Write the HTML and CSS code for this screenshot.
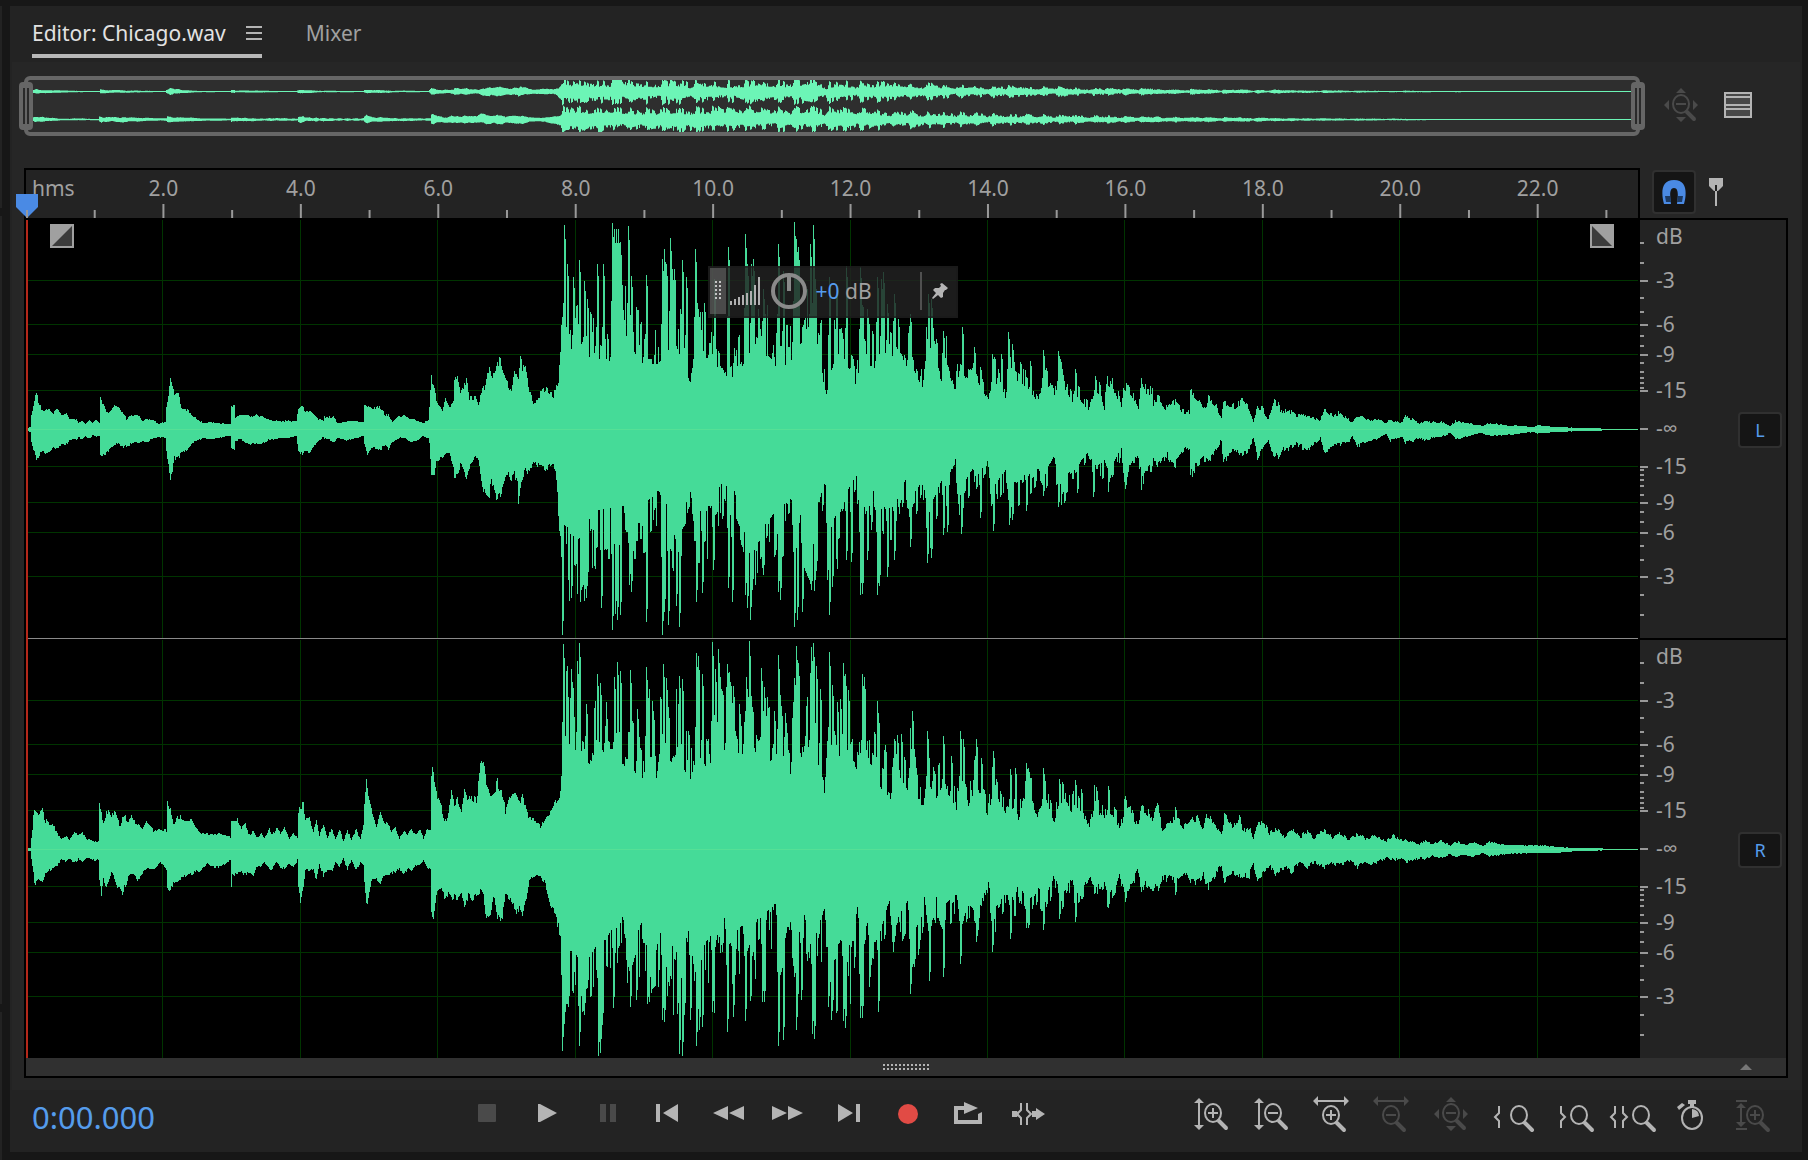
FILE: index.html
```html
<!DOCTYPE html>
<html lang="en">
<head>
    <meta charset="UTF-8">
    <meta name="viewport" content="width=device-width, initial-scale=1.0">
    <title>Editor: Chicago.wav</title>
    <link rel="stylesheet" href="styles.css">
</head>
<body>
    <main class="panel">
        <nav class="tabs">
            <div class="tab active">
                <a href="#editor">Editor: Chicago.wav</a>
                <button class="tab-menu" aria-label="Panel menu">
                    <svg width="16" height="16" viewBox="0 0 16 16"><path d="M0 2h16M0 8h16M0 14h16" stroke="#b4b4b4" stroke-width="2"/></svg>
                </button>
            </div>
            <div class="tab"><a href="#mixer">Mixer</a></div>
        </nav>

        <section class="workspace" id="editor">
            <div class="overview">
                <svg id="overviewWave" viewBox="2 0 1608 52" preserveAspectRatio="none"></svg>
                <button class="range-handle start" aria-label="Range start"></button>
                <button class="range-handle end" aria-label="Range end"></button>
            </div>
            <div class="side-tools">
                <button class="icon-button disabled" aria-label="Zoom out full" disabled>
                    <svg width="44" height="36" viewBox="0 0 44 36"><use href="#zoomFull"/></svg>
                </button>
                <button class="icon-button" aria-label="Show spectral display">
                    <svg width="28" height="26" viewBox="0 0 28 26"><rect x="1" y="1" width="26" height="24" fill="#484848" stroke="#b4b4b4" stroke-width="2"/><path d="M1 5h26M1 13h26M1 17h26" stroke="#b4b4b4" stroke-width="2"/></svg>
                </button>
            </div>

            <div class="ruler">
                <svg id="ruler" class="fill"></svg>
                <svg class="playhead" width="22" height="24" viewBox="0 0 22 24"><path d="M0 0h22v13L11 24 0 13z" fill="#4a8ae4"/><path d="M10 16h2v8h-2z" fill="#999"/></svg>
            </div>
            <div class="snap-tools">
                <button class="toggle snap" aria-label="Toggle snapping" aria-pressed="true">
                    <svg width="24" height="24" viewBox="0 0 24 24"><path d="M2 24C-1 13-1 0 12 0s13 13 10 24h-7c1-8 2-16-3-16s-4 8-3 16z" fill="#4a8ae4"/><path d="M3 16h5l1 6H4zM21 16h-5l-1 6h5z" fill="#1c3a63"/></svg>
                </button>
                <button class="icon-button marker" aria-label="Add marker">
                    <svg width="14" height="28" viewBox="0 0 14 28"><path d="M0 0h14v8l-5 5H8v15H6V13H5L0 8z" fill="#b4b4b4"/><path d="M6 7h2v6H6z" fill="#222"/></svg>
                </button>
            </div>

            <div class="plot">
                <svg id="waveL" class="wave" viewBox="0 0 1612 418" preserveAspectRatio="none"></svg>
                <svg id="waveR" class="wave" viewBox="0 0 1612 418" preserveAspectRatio="none"></svg>
                <span class="cursor-line"></span>
                <button class="fade fade-in" aria-label="Fade in">
                    <svg width="24" height="24" viewBox="0 0 24 24"><path d="M0 0h24v24H0z" fill="#a0a0a0"/><path d="M22 2v20H2z" fill="#3c3c3c"/></svg>
                </button>
                <button class="fade fade-out" aria-label="Fade out">
                    <svg width="24" height="24" viewBox="0 0 24 24"><path d="M0 0h24v24H0z" fill="#a0a0a0"/><path d="M2 2v20h20z" fill="#3c3c3c"/></svg>
                </button>
                <div class="hud">
                    <span class="hud-grip"><svg width="6" height="20" viewBox="0 0 6 20"><path d="M1 0v20M5 0v20" stroke="#c4c4c4" stroke-width="2" stroke-dasharray="2 2"/></svg></span>
                    <svg class="hud-bars" width="30" height="28" viewBox="0 0 30 28"><path d="M1 28v-4M5 28v-6M9 28v-8M13 28V18M17 28V16M21 28V14M25 28V8M29 28V0" stroke="#b0b0b0" stroke-width="2"/></svg>
                    <svg class="hud-knob" width="36" height="36" viewBox="0 0 36 36"><circle cx="18" cy="18" r="16" fill="none" stroke="#8a8a8a" stroke-width="4"/><path d="M18 3v15" stroke="#8a8a8a" stroke-width="4"/></svg>
                    <span class="hud-value"><b>+0</b> dB</span>
                    <button class="hud-pin" aria-label="Pin HUD">
                        <svg width="16" height="16" viewBox="0 0 16 16"><path d="M10 0l6 5-2 2-1 0-2 3 0 4-2 1-3-3-5 4-1-1 4-5-3-3 2-2 4 0 2-2-1-2z" fill="#b4b4b4"/></svg>
                    </button>
                </div>
            </div>
            <div class="scales">
                <div class="scale"><svg class="fill scale-svg"></svg><button class="toggle channel">L</button></div>
                <div class="scale"><svg class="fill scale-svg"></svg><button class="toggle channel">R</button></div>
            </div>

            <div class="splitter">
                <svg width="46" height="6" viewBox="0 0 46 6"><path d="M0 1h46M0 5h46" stroke="#b4b4b4" stroke-width="2" stroke-dasharray="2 2"/></svg>
                <svg class="splitter-arrow" width="12" height="6" viewBox="0 0 12 6"><path d="M6 0l6 6H0z" fill="#777"/></svg>
            </div>
        </section>

        <footer class="controls">
            <div class="timecode">0:00.000</div>
            <div class="button-row">
                <button class="disabled" aria-label="Stop" disabled><svg viewBox="0 0 44 36"><rect x="13" y="8" width="18" height="18" rx="1"/></svg></button>
                <button aria-label="Play"><svg viewBox="0 0 44 36"><path d="M13 8h2l17 9-17 9h-2z"/></svg></button>
                <button class="disabled" aria-label="Pause" disabled><svg viewBox="0 0 44 36"><path d="M15 8h6v18h-6zM25 8h6v18h-6z"/></svg></button>
                <button aria-label="Previous"><svg viewBox="0 0 44 36"><path d="M11 8h4v18h-4zM33 8v18l-15-9z"/></svg></button>
                <button aria-label="Rewind"><svg viewBox="0 0 44 36"><path d="M23 10v14L8 17zM39 10v14l-15-7z"/></svg></button>
                <button aria-label="Fast forward"><svg viewBox="0 0 44 36"><path d="M7 10v14l15-7zM23 10v14l15-7z"/></svg></button>
                <button aria-label="Next"><svg viewBox="0 0 44 36"><path d="M13 8v18l15-9zM31 8h4v18h-4z"/></svg></button>
                <button class="record" aria-label="Record"><svg viewBox="0 0 44 36"><circle cx="23" cy="18" r="10"/></svg></button>
                <button aria-label="Loop"><svg viewBox="0 0 44 36"><path d="M9 10h10V6l14 6-14 6v-4h-6v10h20v-6l4-2v12H9z"/></svg></button>
                <button aria-label="Skip selection"><svg viewBox="0 0 44 36"><path d="M7 15h5l2 3-2 3H7zM27 15h4v-3l9 6-9 6v-3h-4z"/><path class="line" d="M16 7v7l-4 4 4 4v7M22 7v7l4 4-4 4v7"/></svg></button>
            </div>
            <div class="button-row zoom-row">
                <button aria-label="Zoom in amplitude"><svg viewBox="0 0 44 36"><use href="#vArrow"/><use href="#lens" x="24" y="17"/><use href="#plus" x="24" y="17"/></svg></button>
                <button aria-label="Zoom out amplitude"><svg viewBox="0 0 44 36"><use href="#vArrow"/><use href="#lens" x="24" y="17"/><use href="#minus" x="24" y="17"/></svg></button>
                <button aria-label="Zoom in time"><svg viewBox="0 0 44 36"><use href="#hArrow"/><use href="#lens" x="22" y="19"/><use href="#plus" x="22" y="19"/></svg></button>
                <button class="disabled" aria-label="Zoom out time" disabled><svg viewBox="0 0 44 36"><use href="#hArrow"/><use href="#lens" x="22" y="19"/><use href="#minus" x="22" y="19"/></svg></button>
                <button class="disabled" aria-label="Zoom out full" disabled><svg viewBox="0 0 44 36"><use href="#zoomFull"/></svg></button>
                <button aria-label="Zoom in at in point"><svg viewBox="0 0 44 36"><path class="line" d="M10 10v7l-4 4 4 4v7"/><use href="#lens" x="30" y="19"/></svg></button>
                <button aria-label="Zoom in at out point"><svg viewBox="0 0 44 36"><path class="line" d="M12 10v7l4 4-4 4v7"/><use href="#lens" x="30" y="19"/></svg></button>
                <button aria-label="Zoom to selection"><svg viewBox="0 0 44 36"><path class="line" d="M6 10v7l-4 4 4 4v7M14 10v7l4 4-4 4v7"/><use href="#lens" x="32" y="19"/></svg></button>
                <button aria-label="Zoom to time"><svg viewBox="0 0 44 36"><ellipse class="line" cx="23" cy="22" rx="10" ry="11"/><path d="M23 22v-9q7 1 7 7zM19 4h8v4h-2v3h-4V8h-2zM10 14l-2-3 5-4 3 2z"/></svg></button>
                <button class="disabled" aria-label="Zoom selected track" disabled><svg viewBox="0 0 44 36"><path d="M7 4h11v2H7zM7 32h11v2H7zM12 7l5 5h-4v14h4l-5 5-5-5h4V12H7z"/><use href="#lens" x="26" y="19"/><use href="#plus" x="26" y="19"/></svg></button>
            </div>
        </footer>
    </main>

    <svg class="symbols" width="0" height="0">
        <defs>
            <g id="lens"><ellipse class="line" cx="0" cy="0" rx="8" ry="9"/><path class="grip" d="M6 8l7 7"/></g>
            <path id="plus" class="line" d="M-5 0H5M0-5V5"/>
            <path id="minus" class="line" d="M-5 0H5"/>
            <path id="vArrow" d="M10 2l5 5h-4v22h4l-5 5-5-5h4V7H5z"/>
            <path id="hArrow" d="M4 5l5-5v4h26V0l5 5-5 5V6H9v4z"/>
            <g id="zoomFull"><path d="M22 1l5 5H17zM22 35l5-5H17zM5 18l5-5v10zM39 18l-5-5v10z"/><use href="#lens" x="22" y="17"/><use href="#minus" x="22" y="17"/></g>
        </defs>
    </svg>
    <script src="editor.js"></script>
</body>
</html>
```

FILE: styles.css
```css
* {
    box-sizing: border-box;
}
body {
    margin: 0;
    padding: 6px 6px 8px 10px;
    min-height: 100vh;
    display: flex;
    background-color: #171717;
    background-image: linear-gradient(#171717 6px, #232323 6px, #232323 208px, #171717 208px, #171717 216px, #232323 216px, #232323 1004px, #171717 1004px, #171717 1012px, #232323 1012px);
    background-size: 2px 100%;
    background-repeat: no-repeat;
    font-family: "Noto Sans", "Open Sans", sans-serif;
    font-size: 21px;
    color: #a0a0a0;
}
button {
    border: none;
    padding: 0;
    background: none;
    font: inherit;
    cursor: pointer;
}
svg {
    display: block;
}
a {
    color: inherit;
    text-decoration: none;
}
.panel {
    flex: 1;
    min-width: 0;
    display: flex;
    flex-direction: column;
    background-color: #232323;
}

/* tabs */
.tabs {
    display: flex;
    gap: 44px;
    height: 56px;
    padding: 6px 22px 4px;
}
.tab {
    display: flex;
    align-items: center;
    gap: 20px;
    border-bottom: 4px solid transparent;
}
.tab.active {
    color: #e2e2e2;
    border-color: #b8b8b8;
}

/* editor */
.workspace {
    flex: 1;
    margin: 0 2px;
    padding: 14px 12px 12px;
    background-color: #262626;
    display: grid;
    grid-template-columns: minmax(0, 1fr) 148px;
    grid-template-rows: 60px 82px minmax(300px, 1fr) 20px;
}
.fill {
    width: 100%;
    height: 100%;
}
.overview {
    position: relative;
    border: 4px solid #666;
    border-radius: 6px;
    background-color: #2e2e2e;
}
.overview svg {
    width: 100%;
    height: 52px;
    fill: #6cf5b6;
}
.range-handle {
    position: absolute;
    top: 2px;
    width: 14px;
    height: 48px;
    border: solid #666;
    border-width: 6px 4px;
    border-radius: 4px;
    background: linear-gradient(90deg, #2a2a2a 2px, #666 2px, #666 4px, #2a2a2a 4px);
}
.range-handle.start {
    left: -9px;
}
.range-handle.end {
    right: -9px;
}
.side-tools {
    display: flex;
    align-items: center;
    gap: 21px;
    padding: 0 0 2px 19px;
}
.icon-button {
    fill: #b4b4b4;
    stroke: none;
}
.disabled {
    cursor: default;
}
.ruler {
    position: relative;
    margin-top: 32px;
    border: 2px solid #000;
    border-bottom: none;
    background-color: #232323;
}
.ruler rect,
.scale-svg rect {
    fill: #999;
}
.ruler text,
.scale-svg text {
    fill: #a0a0a0;
}
.playhead {
    position: absolute;
    left: -10px;
    bottom: 0;
    z-index: 1;
}
.snap-tools {
    display: flex;
    align-items: flex-start;
    gap: 13px;
    margin-top: 34px;
    padding-left: 12px;
}
.toggle {
    display: flex;
    align-items: center;
    justify-content: center;
    width: 44px;
    border: 2px solid #303030;
    border-radius: 4px;
    background-color: #151515;
    color: #559cec;
}
.snap {
    height: 44px;
}
.marker {
    padding-top: 8px;
}
.plot {
    position: relative;
    display: grid;
    grid-template-rows: 1fr 1fr;
    gap: 2px;
    padding: 2px 2px 0;
    background-color: #000;
}
.wave {
    width: 100%;
    height: 100%;
    min-height: 0;
    fill: #45db98;
}
.wave .grid-line {
    fill: #003400;
}
.wave .center-line {
    fill: #55e096;
}
#waveL {
    box-shadow: 0 1px #8a8a8a;
}
.cursor-line {
    position: absolute;
    left: 2px;
    top: 2px;
    bottom: 0;
    width: 2px;
    background-color: #b4281a;
}
.fade {
    position: absolute;
    top: 6px;
}
.fade-in {
    left: 26px;
}
.fade-out {
    right: 26px;
}

/* volume HUD */
.hud {
    position: absolute;
    top: 48px;
    left: 42.3%;
    width: 250px;
    height: 52px;
    padding-bottom: 2px;
    display: flex;
    align-items: center;
    background-color: rgba(34, 34, 34, 0.82);
    border: 2px solid rgba(24, 24, 24, 0.5);
}
.hud-grip {
    display: flex;
    align-items: center;
    justify-content: center;
    width: 16px;
    height: 100%;
    background-color: rgba(120, 120, 120, 0.5);
}
.hud-bars {
    margin-left: 4px;
}
.hud-knob {
    margin-left: 11px;
}
.hud-value {
    margin-left: 9px;
    font-size: 21px;
}
.hud-value b {
    color: #559cec;
    font-weight: normal;
}
.hud-pin {
    height: 38px;
    margin-left: auto;
    padding: 0 8px 0 10px;
    border-left: 2px solid #505050;
}

/* dB scales */
.scales {
    display: grid;
    grid-template-rows: 1fr 1fr;
    gap: 2px;
    padding: 2px 2px 0 0;
    background-color: #000;
}
.scale {
    display: grid;
    grid-template-columns: minmax(0, 1fr) 44px;
    align-items: center;
    padding-right: 4px;
    min-height: 0;
    background-color: #232323;
}
.scale-svg {
    overflow: visible;
    min-height: 0;
}
.channel {
    height: 36px;
    margin-top: 2px;
    font-size: 18px;
}
.splitter {
    grid-column: 1 / -1;
    display: grid;
    grid-template-columns: 1fr auto 1fr;
    align-items: center;
    border: 2px solid #000;
    border-top: none;
    background-color: #303030;
}
.splitter svg:first-child {
    grid-column: 2;
}
.splitter-arrow {
    justify-self: end;
    margin-right: 34px;
}

/* transport and zoom */
.controls {
    display: flex;
    height: 62px;
    padding: 0 21px 0 22px;
}
.timecode {
    flex: 0 1 425px;
    font-size: 31px;
    line-height: 55px;
    color: #559cec;
}
.button-row {
    display: flex;
    align-items: flex-start;
    padding-top: 6px;
}
.zoom-row {
    margin-left: auto;
}
.button-row button {
    width: 60px;
    display: flex;
    justify-content: center;
    fill: #b4b4b4;
    stroke: #b4b4b4;
}
.button-row svg {
    width: 44px;
    height: 36px;
    overflow: visible;
    stroke-width: 0;
}
.button-row .disabled,
.side-tools .disabled {
    fill: #4a4a4a;
    stroke: #4a4a4a;
}
.side-tools .disabled svg {
    stroke-width: 0;
}
.button-row .record {
    fill: #e14b45;
}
.line {
    fill: none;
    stroke-width: 2px;
}
.grip {
    stroke-width: 4px;
    stroke-linecap: round;
}
.symbols {
    position: absolute;
}
```

FILE: editor.js
```javascript
const DURATION = 23.46;
const WIDTH = 1612;
const MID = 209;

// envelope: x, level above the centre, level below it
const channels = {
    L: {
        envelope: `0 1 1,4 2 2,5 13 12,8 27 22,10 37 32,13 24 25,17 17 22,23 21 24,27 15 18,31 21 19,35 14 14,40 16 14,43 11 10,50 9 10,52 6 7,56 8 9,59 5 6,63 9 9,66 6 5,70 10 7,73 6 6,74 32 24,77 24 25,80 16 23,84 19 19,88 23 15,92 21 13,96 17 17,100 10 16,106 14 13,113 13 12,116 8 12,121 10 12,127 9 8,132 5 7,139 7 8,140 22 20,142 32 36,144 54 54,146 45 42,148 34 28,152 35 28,155 22 23,161 19 20,165 13 13,171 10 11,177 6 8,184 7 9,192 6 8,204 5 6,205 23 18,208 23 19,209 11 11,214 14 9,219 14 13,225 12 14,230 14 14,236 12 14,242 9 10,251 8 9,270 8 6,272 20 22,276 23 24,279 18 21,283 18 22,287 14 16,292 10 11,297 8 7,298 12 8,307 12 12,311 6 8,320 8 10,337 7 6,338 26 14,341 24 25,345 21 17,354 22 20,359 14 14,362 14 19,366 7 12,372 12 8,378 13 8,383 11 11,389 9 12,397 6 6,402 9 9,403 22 14,405 50 45,408 40 45,410 30 30,416 18 28,419 32 24,423 22 23,427 28 38,428 46 48,431 55 48,434 38 33,437 40 38,440 50 50,443 30 36,449 32 28,452 24 30,455 36 48,459 44 68,462 60 70,465 52 52,470 60 68,474 70 64,477 58 56,480 48 44,485 37 48,488 62 44,491 52 52,492 50 76,494 72 60,496 58 48,499 62 40,503 38 44,507 26 30,511 28 36,514 36 34,519 40 40,523 36 36,527 34 34,530 46 48,532 44 80,534 82 108,536 110 108,550 82 123,567 84 95,583 77 90,600 105 88,615 76 88,632 76 70,649 100 100,664 50 68,668 88 95,683 76 88,698 54 56,714 68 78,728 100 125,749 73 95,764 75 80,783 110 115,793 95 80,799 35 54,807 75 105,816 85 80,830 50 52,835 85 98,847 66 66,860 90 92,868 85 90,879 58 56,883 80 85,896 48 50,901 90 95,915 55 60,917 80 70,929 40 34,933 65 70,946 48 46,949 60 50,962 32 32,966 58 68,980 32 45,984 60 65,1001 48 50,1012 30 45,1017 55 52,1028 29 30,1032 60 62,1046 30 45,1049 40 45,1062 22 25,1068 42 42,1074 40 40,1078 22 35,1082 45 48,1089 42 34,1095 18 20,1098 46 45,1103 38 40,1108 32 30,1112 22 25,1115 54 54,1119 40 40,1126 38 36,1127 26 28,1132 31 38,1141 20 26,1148 28 36,1155 18 22,1163 18 18,1164 36 43,1166 38 42,1174 26 34,1179 20 28,1182 34 30,1189 24 22,1195 12 10,1197 30 35,1203 24 25,1210 24 20,1216 28 24,1222 22 20,1227 8 8,1231 22 27,1236 20 18,1242 10 10,1247 28 28,1252 26 26,1255 18 20,1263 18 18,1270 13 14,1281 15 20,1294 8 8,1297 20 22,1308 12 16,1312 16 15,1322 10 12,1326 6 6,1331 14 16,1344 8 10,1349 10 10,1360 6 4,1363 9 11,1375 6 6,1379 13 13,1394 6 8,1398 8 10,1411 6 6,1415 7 7,1424 3 3,1429 8 9,1442 6 6,1456 3 3,1463 6 6,1480 4 5,1508 2 2,1511 4 4,1528 2 2,1556 1 1,1580 .4 .4,1612 .4 .4`,
        up: '538 204,541 165,547 152,553 169,558 148,561 130,571 165,577 165,586 206,588 200,590 200,592 200,594 187,602 203,605 153,620 154,636 170,638 180,640 165,644 191,646 160,648 160,656 169,660 152,669 180,672 120,678 126,688 150,702 182,719 195,721 165,725 165,727 170,732 120,737 140,752 185,757 158,768 207,770 190,772 182,784 185,787 204,789 150,803 152,810 145,820 163,834 162,841 120,851 152,855 150,857 157,861 125,868 135,872 110,884 115,902 135,905 130,917 98,936 102,948 82,966 75,975 75,982 97,986 85,1004 68,1017 79,1032 78,1049 60,1069 53,1084 48',
        down: '536 205,542 150,545 168,554 172,558 171,560 168,575 178,586 200,589 184,591 190,594 185,603 155,605 162,620 192,636 205,638 182,642 195,650 176,653 197,670 172,676 163,687 140,702 158,706 172,719 165,721 178,724 190,726 160,737 145,752 162,754 170,768 197,771 190,776 182,785 160,788 161,790 141,801 150,803 185,806 157,820 130,825 132,834 165,836 164,841 130,851 165,853 156,861 147,868 130,884 117,901 133,905 128,917 105,921 102,935 104,954 88,967 101,983 95,986 90,1000 81,1017 66,1032 77,1051 63,1067 67,1099 59'
    },
    R: {
        envelope: `0 1 1,4 1 1,5 10 10,7 32 22,8 39 35,12 36 30,16 38 30,19 28 24,26 25 18,31 15 15,35 10 10,40 12 11,43 9 9,48 17 13,52 13 9,56 16 12,60 10 8,68 7 10,72 8 10,73 44 28,75 35 48,77 28 30,80 35 38,82 38 32,85 33 22,88 38 28,91 33 36,93 22 35,96 31 42,99 32 36,102 26 26,105 35 25,108 27 24,112 24 30,116 20 24,120 27 18,127 18 20,134 19 12,140 18 20,141 46 38,144 38 40,147 25 34,152 33 30,158 29 27,165 30 24,169 22 22,175 16 20,181 15 14,192 15 18,204 12 10,205 30 37,206 30 25,211 30 24,215 20 22,219 24 25,223 14 22,227 18 24,230 11 17,235 15 16,238 10 12,243 20 19,246 14 18,250 21 12,254 15 18,258 21 18,263 10 14,267 16 17,271 11 10,272 38 38,274 42 50,277 44 38,279 30 20,283 30 20,287 17 18,290 27 30,293 13 14,297 25 25,301 12 20,305 20 22,309 10 12,313 20 17,317 8 8,321 18 20,325 9 10,330 20 20,334 9 12,337 25 15,338 45 35,340 68 56,342 52 50,345 40 30,350 22 30,354 37 35,357 28 25,361 27 26,365 16 22,369 22 24,373 10 18,378 18 24,381 14 18,385 20 22,389 14 16,394 19 15,397 10 10,401 20 18,404 20 20,405 75 65,407 78 68,409 66 52,411 50 44,415 42 40,418 26 46,422 34 45,425 58 50,428 46 46,431 50 48,435 40 46,438 58 56,442 48 46,445 52 50,450 48 45,454 80 42,457 84 46,460 62 70,464 50 62,468 58 45,471 66 64,475 60 72,479 38 42,484 52 48,489 53 60,493 46 60,496 55 68,500 38 50,503 30 30,509 30 25,514 22 26,518 30 32,521 32 42,525 38 56,529 45 60,533 50 85,535 75 100,537 140 110,545 105 110,549 115 118,567 92 105,573 120 95,581 102 100,596 95 75,605 95 110,615 78 85,623 110 110,630 82 105,634 115 80,646 100 110,651 110 115,666 70 85,670 110 110,683 90 95,688 130 115,697 105 62,701 140 110,716 95 85,720 135 120,731 93 80,749 105 62,753 120 110,764 86 82,768 140 110,778 85 75,785 140 115,798 60 66,802 130 115,814 85 105,825 110 110,831 75 62,835 120 110,843 90 75,856 68 85,864 58 55,868 90 85,881 62 60,885 100 100,892 52 80,898 52 55,901 80 85,910 60 55,917 75 65,930 46 52,935 80 80,942 50 60,950 75 72,962 36 38,967 68 70,979 40 52,989 50 55,992 34 38,1001 65 60,1011 36 42,1019 58 55,1028 30 28,1034 55 52,1046 42 32,1050 50 52,1064 24 30,1068 50 45,1077 32 34,1082 44 52,1089 34 40,1094 18 22,1098 42 45,1106 38 34,1111 22 22,1115 42 42,1120 40 34,1126 28 36,1132 44 36,1136 18 28,1145 28 30,1149 30 32,1158 22 22,1165 30 34,1171 30 30,1177 20 24,1180 32 38,1189 26 24,1195 14 14,1198 34 32,1205 24 24,1213 26 26,1219 18 25,1223 22 26,1227 10 14,1231 26 28,1238 24 24,1243 16 15,1250 20 26,1258 12 16,1265 20 22,1274 12 12,1281 18 17,1287 10 12,1298 20 18,1306 12 13,1313 17 16,1322 9 10,1331 16 17,1339 10 12,1346 13 14,1360 8 8,1367 14 10,1377 8 8,1380 9 12,1393 5 8,1398 8 9,1406 5 6,1415 8 8,1424 4 4,1429 8 7,1439 4 5,1446 7 7,1456 3 3,1463 7 6,1480 4 4,1511 4 3,1532 2 3,1549 1 1,1580 .4 .4,1612 .4 .4`,
        up: '537 205,540 178,545 180,551 188,553 206,560 145,571 175,574 166,588 172,591 187,594 178,604 179,611 140,620 182,626 148,637 185,640 171,653 173,656 170,670 196,672 193,676 175,686 207,689 180,692 200,694 172,700 162,702 176,707 163,713 145,720 172,723 208,725 153,735 181,738 162,741 152,748 138,752 194,755 143,759 136,770 203,772 186,780 143,785 202,787 206,790 183,794 160,803 197,806 164,811 147,814 150,817 186,819 175,822 159,836 175,838 172,851 148,852 136,859 104,868 110,871 114,875 115,886 138,901 118,917 113,925 93,934 118,937 110,950 110,955 91,967 98,984 80,989 81,1000 86,1017 81,1033 70,1049 69,1055 60,1070 62,1082 63,1099 53,1149 42,1198 36,1213 34',
        down: '536 201,538 174,542 157,553 196,558 165,572 206,574 203,576 175,587 158,604 157,610 150,621 154,636 170,638 172,651 164,653 204,656 206,658 165,664 170,670 196,673 180,676 177,686 162,701 182,707 167,719 171,736 152,738 152,752 196,757 190,770 180,775 150,786 184,788 189,802 157,806 161,817 171,819 178,834 168,836 168,843 137,852 162,868 92,884 144,888 117,903 131,917 127,934 114,950 92,966 102,984 89,1000 78,1017 80,1033 69,1049 72,1082 58,1099 52,1149 45'
    }
};

// ruler in seconds, dB rows as y within one channel
const majorTimes = [2, 4, 6, 8, 10, 12, 14, 16, 18, 20, 22];
const dbRows = [[60, '-3'], [104, '-6'], [134, '-9'], [170, '-15']];
const dbMinor = [22, 42, 77, 91, 115, 125, 142, 151, 157, 162, 167];

// small repeatable generator, so the detail is the same on each load
let seed = 7;
function random() {
    seed = (seed * 16807) % 2147483647;
    return seed / 2147483647;
}

function parse(text) {
    return text.split(',').map(item => item.trim().split(' ').map(Number));
}

function levels(points, spikes, side) {
    const out = [];
    let i = 0;
    let noise = 1;
    for (let x = 0; x < WIDTH; x++) {
        while (i < points.length - 2 && points[i + 1][0] <= x) i++;
        const a = points[i], b = points[i + 1];
        const t = (x - a[0]) / (b[0] - a[0] || 1);
        if (x % 2 === 0 || random() > 0.6) {
            const r = random();
            if (x > 537 && x < 860) noise = 0.86 + 0.65 * r * r;
            else if (x >= 860 && x < 1100) noise = 0.85 + 0.5 * r * r;
            else if (x >= 1100) noise = 0.84 + 0.3 * r;
            else noise = 0.92 + 0.16 * r;
        }
        out.push((a[side] + (b[side] - a[side]) * t) * noise);
    }
    spikes.forEach(([x, level]) => {
        out[x] = level;
        out[x + 1] = Math.max(out[x + 1], level * 0.93);
        out[x - 1] = Math.max(out[x - 1], level * 0.62);
    });
    return out;
}

function wavePath(channel) {
    const points = parse(channel.envelope);
    const top = levels(points, parse(channel.up), 1);
    const bottom = levels(points, parse(channel.down), 2);
    let d = `M0 ${MID}`;
    top.forEach(v => d += `V${MID - Math.round(v)}h1`);
    for (let x = WIDTH - 1; x >= 0; x--) d += `V${MID + 1 + Math.round(bottom[x])}h-1`;
    return d + 'Z';
}

function rect(x, y, w, h, extra = '') {
    return `<rect x="${x}" y="${y}" width="${w}" height="${h}" ${extra}/>`;
}

function percent(value, total) {
    return (value / total * 100).toFixed(3) + '%';
}

function drawWave(id, path) {
    let html = '';
    majorTimes.forEach(t => html += rect(Math.round(t / DURATION * WIDTH) - 1, 0, 1, 418, 'class="grid-line"'));
    dbRows.forEach(([y]) => html += rect(0, y, WIDTH, 1, 'class="grid-line"') + rect(0, 416 - y, WIDTH, 1, 'class="grid-line"'));
    html += `<path d="${path}"/>` + rect(0, MID, WIDTH, 1, 'class="center-line"');
    document.getElementById(id).innerHTML = html;
}

function drawRuler() {
    let html = '<text x="6" y="26">hms</text>';
    for (let t = 1; t <= 23; t++) {
        const x = percent(t, DURATION);
        const major = t % 2 === 0;
        html += rect(x, major ? 34 : 40, 2, major ? 14 : 8, 'transform="translate(-1 0)"');
        if (major) html += `<text x="${x}" y="26" text-anchor="middle">${t.toFixed(1)}</text>`;
    }
    document.getElementById('ruler').innerHTML = html;
}

function drawScale(svg) {
    let html = '<text x="16" y="24">dB</text>';
    const label = (y, text) => {
        html += rect(0, percent(y, 418), 8, 2);
        html += `<text x="16" y="${percent(y, 418)}" dy="8">${text}</text>`;
    };
    dbRows.forEach(([y, text]) => {
        label(y, text);
        label(416 - y, text);
    });
    label(208, '-∞');
    dbMinor.forEach(y => html += rect(0, percent(y, 418), 4, 2) + rect(0, percent(416 - y, 418), 4, 2));
    svg.innerHTML = html;
}

const left = wavePath(channels.L);
const right = wavePath(channels.R);
drawWave('waveL', left);
drawWave('waveR', right);
document.getElementById('overviewWave').innerHTML =
    `<path d="${left}" transform="translate(0 -2.5) scale(1 .067)"/>` + rect(0, 11, WIDTH, 1) +
    `<path d="${right}" transform="translate(0 25.5) scale(1 .067)"/>` + rect(0, 39, WIDTH, 1);
drawRuler();
document.querySelectorAll('.scale-svg').forEach(drawScale);
```
